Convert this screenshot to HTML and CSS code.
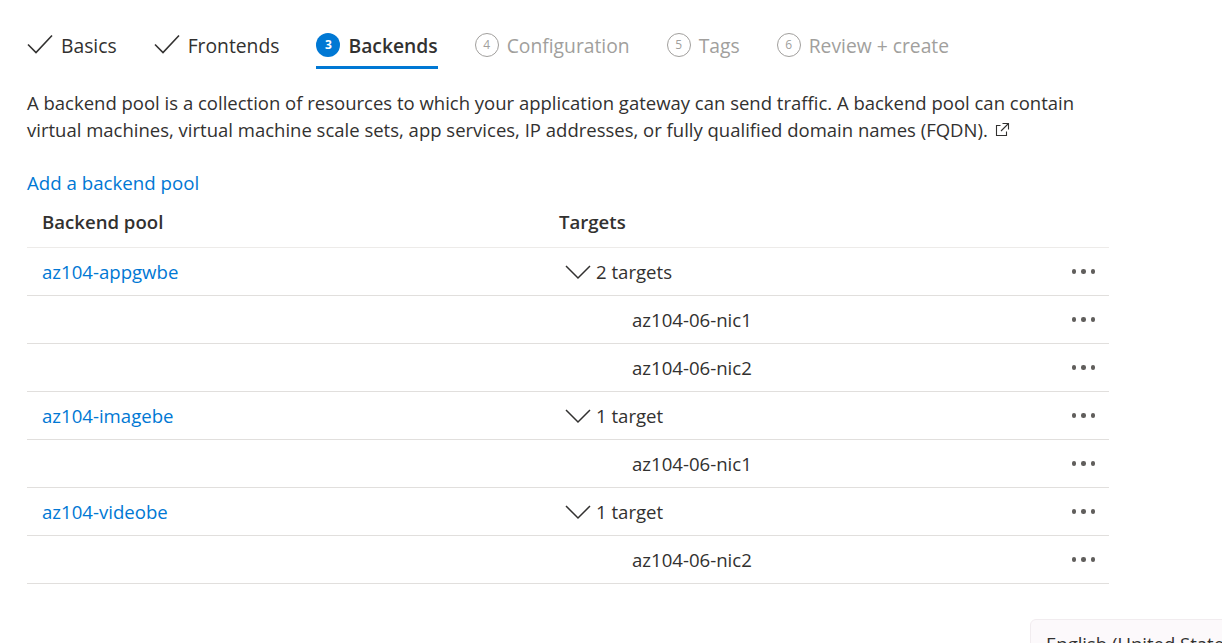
FILE: index.html
```html
<!DOCTYPE html>
<html lang="en">
<head>
<meta charset="utf-8">
<title>Backends</title>
<link rel="stylesheet" href="styles.css">
</head>
<body>
<div class="page">
  <nav class="tabs">
    <div class="tab done">
      <svg class="check" width="26" height="20" viewBox="0 0 26 20"><path d="M1 10.5 L9 18.5 L25 1.5" fill="none" stroke="#323130" stroke-width="1.6"/></svg>
      <span>Basics</span>
    </div>
    <div class="tab done">
      <svg class="check" width="26" height="20" viewBox="0 0 26 20"><path d="M1 10.5 L9 18.5 L25 1.5" fill="none" stroke="#323130" stroke-width="1.6"/></svg>
      <span>Frontends</span>
    </div>
    <div class="tab active">
      <span class="num filled">3</span>
      <span>Backends</span>
    </div>
    <div class="tab todo">
      <span class="num">4</span>
      <span>Configuration</span>
    </div>
    <div class="tab todo">
      <span class="num">5</span>
      <span>Tags</span>
    </div>
    <div class="tab todo">
      <span class="num">6</span>
      <span>Review + create</span>
    </div>
  </nav>

  <p class="desc">A backend pool is a collection of resources to which your application gateway can send traffic. A backend pool can contain virtual machines, virtual machine scale sets, app services, IP addresses, or fully qualified domain names (FQDN).<svg class="ext" width="16" height="16" viewBox="0 0 16 16"><path d="M6.5 3.5 H2.5 V13.5 H12.5 V9.5" fill="none" stroke="#323130" stroke-width="1.1"/><path d="M8.5 1.5 H14.5 V7.5 M14.5 1.5 L7 9" fill="none" stroke="#323130" stroke-width="1.1"/></svg></p>

  <a class="add" href="#">Add a backend pool</a>

  <div class="table">
    <div class="row head">
      <div class="c1">Backend pool</div>
      <div class="c2">Targets</div>
      <div class="c3"></div>
    </div>

    <div class="row">
      <div class="c1"><a href="#">az104-appgwbe</a></div>
      <div class="c2"><svg class="chev" width="26" height="16" viewBox="0 0 26 16"><path d="M1 2 L13 14 L25 2" fill="none" stroke="#323130" stroke-width="1.5"/></svg>2 targets</div>
      <div class="c3"><span class="dots"><i></i><i></i><i></i></span></div>
    </div>
    <div class="row">
      <div class="c1"></div>
      <div class="c2 child">az104-06-nic1</div>
      <div class="c3"><span class="dots"><i></i><i></i><i></i></span></div>
    </div>
    <div class="row">
      <div class="c1"></div>
      <div class="c2 child">az104-06-nic2</div>
      <div class="c3"><span class="dots"><i></i><i></i><i></i></span></div>
    </div>

    <div class="row">
      <div class="c1"><a href="#">az104-imagebe</a></div>
      <div class="c2"><svg class="chev" width="26" height="16" viewBox="0 0 26 16"><path d="M1 2 L13 14 L25 2" fill="none" stroke="#323130" stroke-width="1.5"/></svg>1 target</div>
      <div class="c3"><span class="dots"><i></i><i></i><i></i></span></div>
    </div>
    <div class="row">
      <div class="c1"></div>
      <div class="c2 child">az104-06-nic1</div>
      <div class="c3"><span class="dots"><i></i><i></i><i></i></span></div>
    </div>

    <div class="row">
      <div class="c1"><a href="#">az104-videobe</a></div>
      <div class="c2"><svg class="chev" width="26" height="16" viewBox="0 0 26 16"><path d="M1 2 L13 14 L25 2" fill="none" stroke="#323130" stroke-width="1.5"/></svg>1 target</div>
      <div class="c3"><span class="dots"><i></i><i></i><i></i></span></div>
    </div>
    <div class="row">
      <div class="c1"></div>
      <div class="c2 child">az104-06-nic2</div>
      <div class="c3"><span class="dots"><i></i><i></i><i></i></span></div>
    </div>
  </div>
</div>

<div class="lang-pop">English (United States)</div>
</body>
</html>
```

FILE: styles.css
```css
html, body {
  margin: 0;
  padding: 0;
  background: #ffffff;
  overflow: hidden;
}

body {
  font-family: "Open Sans", "Noto Sans", sans-serif;
  color: #323130;
  font-size: 18px;
}

.page {
  width: 1082px;
  padding: 20px 0 0 27px;
}

.tabs {
  display: flex;
  gap: 37px;
  height: 49px;
}

.tab {
  display: flex;
  align-items: center;
  gap: 8px;
  padding-top: 4px;
  border-bottom: 3px solid transparent;
  font-size: 19.3px;
  white-space: nowrap;
}

.tab.active {
  border-bottom-color: #0078d4;
  font-weight: 600;
}

.tab.todo {
  color: #a19f9d;
}

.check {
  display: block;
  margin-top: -2px;
}

.num {
  display: inline-flex;
  align-items: center;
  justify-content: center;
  width: 22px;
  height: 22px;
  border: 1px solid #a19f9d;
  border-radius: 50%;
  font-size: 12px;
  font-weight: 400;
  color: #a19f9d;
  margin-top: -1px;
}

.num.filled {
  background: #0078d4;
  border-color: #0078d4;
  color: #ffffff;
  font-weight: 700;
  width: 24px;
  height: 24px;
  border: 0;
}

.desc {
  margin: 20px 0 0 0;
  font-size: 18.5px;
  line-height: 27px;
}

.ext {
  display: inline-block;
  vertical-align: -1px;
  margin-left: 6px;
}

.add {
  display: block;
  margin-top: 28px;
  line-height: 24px;
  color: #0078d4;
  text-decoration: none;
  font-size: 18.7px;
  width: max-content;
}

.table {
  margin-top: 3px;
}

.row {
  display: grid;
  grid-template-columns: 517px 1fr 80px;
  height: 47px;
  align-items: center;
  border-bottom: 1px solid #e1dfdd;
  font-size: 18.6px;
}

.row.head {
  height: 47px;
  padding-bottom: 2px;
  font-weight: 600;
  border-bottom-color: #edebe9;
}

.c1 {
  padding-left: 15px;
}

.c1 a {
  color: #0078d4;
  text-decoration: none;
}

.c2 {
  padding-left: 15px;
  display: flex;
  align-items: center;
}

.chev {
  display: block;
  margin-left: 6px;
  margin-right: 5px;
}

.c2.child {
  padding-left: 88px;
}

.c3 {
  display: flex;
  justify-content: flex-end;
  padding-right: 14px;
}

.dots {
  display: flex;
  gap: 5px;
}

.dots i {
  display: block;
  width: 4.5px;
  height: 4.5px;
  border-radius: 50%;
  background: #605e5c;
}

.lang-pop {
  position: fixed;
  left: 1030px;
  top: 619px;
  width: 260px;
  height: 60px;
  box-sizing: border-box;
  padding: 11px 0 0 15px;
  background: #fcf9fb;
  border: 1px solid #f1ecef;
  border-radius: 6px;
  font-size: 18.5px;
  color: #323130;
  white-space: nowrap;
}
```
